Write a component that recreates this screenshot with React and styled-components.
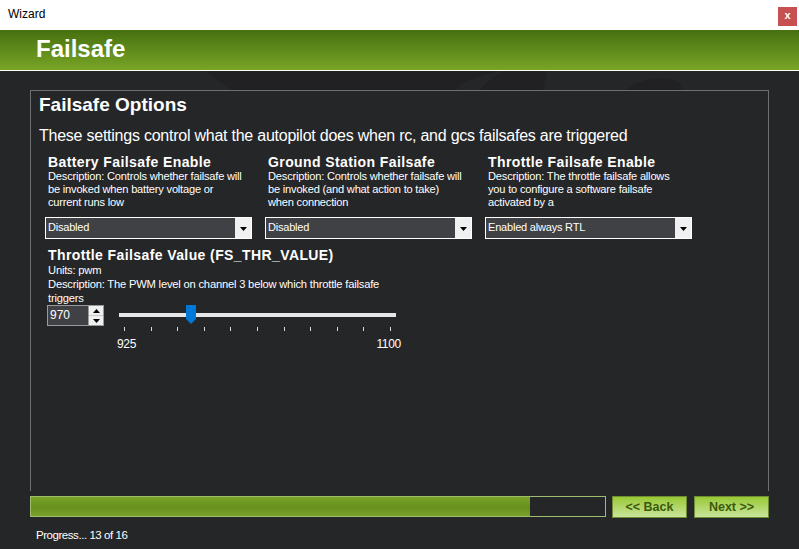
import React from 'react';
import styled, { createGlobalStyle } from 'styled-components';

const GlobalStyle = createGlobalStyle`
  html, body {
    margin: 0;
    padding: 0;
    background: #252628;
  }
  * {
    box-sizing: border-box;
  }
`;

// description lines wrap the way the WinForms labels do
const columns = [
  {
    title: 'Battery Failsafe Enable',
    desc: ['Description: Controls whether failsafe will', 'be invoked when battery voltage or', 'current runs low'],
    value: 'Disabled',
  },
  {
    title: 'Ground Station Failsafe',
    desc: ['Description: Controls whether failsafe will', 'be invoked (and what action to take)', 'when connection'],
    value: 'Disabled',
  },
  {
    title: 'Throttle Failsafe Enable',
    desc: ['Description: The throttle failsafe allows', 'you to configure a software failsafe', 'activated by a'],
    value: 'Enabled always RTL',
  },
];

const ticks = Array.from({ length: 11 }, (_, i) => i);

export default function App() {
  return (
    <Window>
      <GlobalStyle />
      <TitleBar>
        <TitleText>Wizard</TitleText>
        <CloseButton>x</CloseButton>
      </TitleBar>
      <Header>Failsafe</Header>
      <Body>
        <Backdrop viewBox="0 0 799 478" preserveAspectRatio="none">
          <path d="M205 0 L547 0 L543 19 L480 19 C488 10 496 4 503 0 L500 0 C470 6 460 14 455 19 L232 19 Z" fill="#212123" />
          <path d="M627 19 C634 8 668 4 680 12 L682 19 Z" fill="#212123" />
        </Backdrop>
        <Panel>
          <PanelTitle>Failsafe Options</PanelTitle>
          <Intro>These settings control what the autopilot does when rc, and gcs failsafes are triggered</Intro>
          <Columns>
            {columns.map((c) => (
              <Column key={c.title}>
                <ParamTitle>{c.title}</ParamTitle>
                <Desc>
                  {c.desc.map((l) => (
                    <DescLine key={l}>{l}</DescLine>
                  ))}
                </Desc>
                <Select>
                  <SelectValue>{c.value}</SelectValue>
                  <SelectArrow>
                    <svg width="7" height="4" viewBox="0 0 7 4">
                      <path d="M0 0 H7 L3.5 4 Z" fill="#000" />
                    </svg>
                  </SelectArrow>
                </Select>
              </Column>
            ))}
          </Columns>
          <ValueBlock>
            <ParamTitle>Throttle Failsafe Value (FS_THR_VALUE)</ParamTitle>
            <Line>Units: pwm</Line>
            <Line>Description: The PWM level on channel 3 below which throttle failsafe triggers</Line>
            <SliderRow>
              <Spin>
                <SpinValue>970</SpinValue>
                <SpinButtons>
                  <SpinBtn>
                    <svg width="7" height="4" viewBox="0 0 7 4">
                      <path d="M0 4 H7 L3.5 0 Z" fill="#000" />
                    </svg>
                  </SpinBtn>
                  <SpinBtn>
                    <svg width="7" height="4" viewBox="0 0 7 4">
                      <path d="M0 0 H7 L3.5 4 Z" fill="#000" />
                    </svg>
                  </SpinBtn>
                </SpinButtons>
              </Spin>
              <Slider>
                <Track>
                  <Thumb style={{ left: `${((970 - 925) / 175) * 100}%` }}>
                    <svg width="10" height="19" viewBox="0 0 10 19">
                      <path d="M0 0 H10 V14 L5 19 L0 14 Z" fill="#0078d7" />
                    </svg>
                  </Thumb>
                </Track>
                <Ticks>
                  {ticks.map((t) => (
                    <Tick key={t} />
                  ))}
                </Ticks>
                <Scale>
                  <span>925</span>
                  <span>1100</span>
                </Scale>
              </Slider>
            </SliderRow>
          </ValueBlock>
        </Panel>
        <FooterRow>
          <Progress>
            <ProgressFill $pct={87} />
          </Progress>
          <NavButton>&lt;&lt; Back</NavButton>
          <NavButton>Next &gt;&gt;</NavButton>
        </FooterRow>
        <Status>Progress... 13 of 16</Status>
      </Body>
    </Window>
  );
}

const Window = styled.div`
  width: 799px;
  height: 549px;
  display: flex;
  flex-direction: column;
  font-family: "Liberation Sans", Arial, sans-serif;
  color: #fff;
  overflow: hidden;
`;

const TitleBar = styled.div`
  height: 30px;
  background: #fff;
  display: flex;
  align-items: center;
  justify-content: space-between;
  padding: 0 2px 0 8px;
`;

const TitleText = styled.div`
  color: #000;
  font-size: 12px;
  margin-top: -2px;
`;

const CloseButton = styled.div`
  width: 19px;
  height: 19px;
  background: #c75050;
  color: #fff;
  font-size: 11px;
  font-weight: bold;
  display: flex;
  align-items: center;
  justify-content: center;
  margin-top: 2px;
  padding-bottom: 2px;
`;

const Header = styled.div`
  height: 41px;
  background: linear-gradient(#467010, #78a526);
  border-bottom: 1px solid #fff;
  padding: 0 0 2px 36px;
  display: flex;
  align-items: center;
  font-size: 24px;
  font-weight: bold;
  color: #fff;
`;

const Body = styled.div`
  flex: 1;
  position: relative;
  background: #252628;
  padding: 19px 30px 0 30px;
  display: flex;
  flex-direction: column;
`;

const Backdrop = styled.svg`
  position: absolute;
  left: 0;
  top: 0;
  width: 799px;
  height: 478px;
`;

const Panel = styled.div`
  position: relative;
  height: 401px;
  border: 1px solid #6f6f6f;
  border-bottom: none;
  padding: 3px 0 0 8px;
`;

const PanelTitle = styled.div`
  font-size: 19px;
  font-weight: bold;
  line-height: 22px;
`;

const Intro = styled.div`
  font-size: 16px;
  line-height: 20px;
  margin-top: 10px;
  letter-spacing: -0.24px;
`;

const Columns = styled.div`
  display: grid;
  grid-template-columns: repeat(3, 220px);
  margin: 8px 0 0 6px;
`;

const Column = styled.div`
  display: flex;
  flex-direction: column;
`;

const ParamTitle = styled.div`
  font-size: 14px;
  font-weight: bold;
  line-height: 16px;
  letter-spacing: 0.4px;
  padding-left: 3px;
`;

const Desc = styled.div`
  padding-left: 3px;
  height: 39px;
`;

const DescLine = styled.div`
  font-size: 11.1px;
  line-height: 13px;
  letter-spacing: -0.2px;
  white-space: nowrap;
`;

const Select = styled.div`
  margin-top: 8px;
  width: 207px;
  height: 22px;
  border: 1px solid #fff;
  background: #404144;
  display: flex;
  align-items: stretch;
`;

const SelectValue = styled.div`
  flex: 1;
  font-size: 11px;
  line-height: 19px;
  padding-left: 2px;
  letter-spacing: -0.2px;
`;

const SelectArrow = styled.div`
  width: 16px;
  background: #f0f0f0;
  display: flex;
  align-items: center;
  justify-content: center;
  padding-top: 1px;
`;

const ValueBlock = styled.div`
  margin: 8px 0 0 6px;
  width: 380px;
`;

const Line = styled.div`
  font-size: 11.2px;
  line-height: 14px;
  letter-spacing: -0.2px;
  padding-left: 3px;
  width: 350px;
`;

const SliderRow = styled.div`
  display: flex;
  align-items: flex-start;
  padding-left: 2px;
`;

const Spin = styled.div`
  width: 57px;
  height: 21px;
  border: 1px solid #9a9a9a;
  display: flex;
`;

const SpinValue = styled.div`
  flex: 1;
  background: #404144;
  font-size: 12px;
  line-height: 19px;
  padding-left: 2px;
`;

const SpinButtons = styled.div`
  width: 15px;
  display: flex;
  flex-direction: column;
  background: #f0f0f0;
  border-left: 1px solid #9a9a9a;
`;

const SpinBtn = styled.div`
  flex: 1;
  display: flex;
  align-items: center;
  justify-content: center;
  border-bottom: 1px solid #c8c8c8;
  &:last-child {
    border-bottom: none;
  }
`;

const Slider = styled.div`
  margin-left: 15px;
  width: 282px;
  padding-top: 8px;
`;

const Track = styled.div`
  position: relative;
  height: 4px;
  width: 277px;
  background: #e6e6e6;
`;

const Thumb = styled.div`
  position: absolute;
  top: -8px;
  margin-left: -4px;
  line-height: 0;
`;

const Ticks = styled.div`
  display: flex;
  justify-content: space-between;
  margin: 10px 0 0 5px;
  width: 267px;
`;

const Tick = styled.div`
  width: 1px;
  height: 4px;
  background: #d8d8d8;
`;

const Scale = styled.div`
  display: flex;
  justify-content: space-between;
  font-size: 12px;
  line-height: 14px;
  margin-top: 6px;
  margin-left: -2px;
  letter-spacing: -0.3px;
`;

const FooterRow = styled.div`
  display: flex;
  align-items: flex-start;
  margin-top: 5px;
  gap: 6px;
`;

const Progress = styled.div`
  width: 576px;
  height: 21px;
  border: 1px solid #a0bb6e;
  background: #252628;
`;

const ProgressFill = styled.div`
  width: ${(p) => p.$pct}%;
  height: 100%;
  background: linear-gradient(#79a328, #67901d 55%, #78a32a);
`;

const NavButton = styled.div`
  width: 75px;
  height: 22px;
  border: 1px solid #6f8c32;
  background: linear-gradient(#98c834, #c9e59c);
  color: #3b5a0c;
  font-size: 12.5px;
  font-weight: bold;
  display: flex;
  align-items: center;
  justify-content: center;
  & + & {
    margin-left: 1px;
  }
`;

const Status = styled.div`
  margin: 11px 0 0 6px;
  font-size: 11.5px;
  letter-spacing: -0.45px;
`;
